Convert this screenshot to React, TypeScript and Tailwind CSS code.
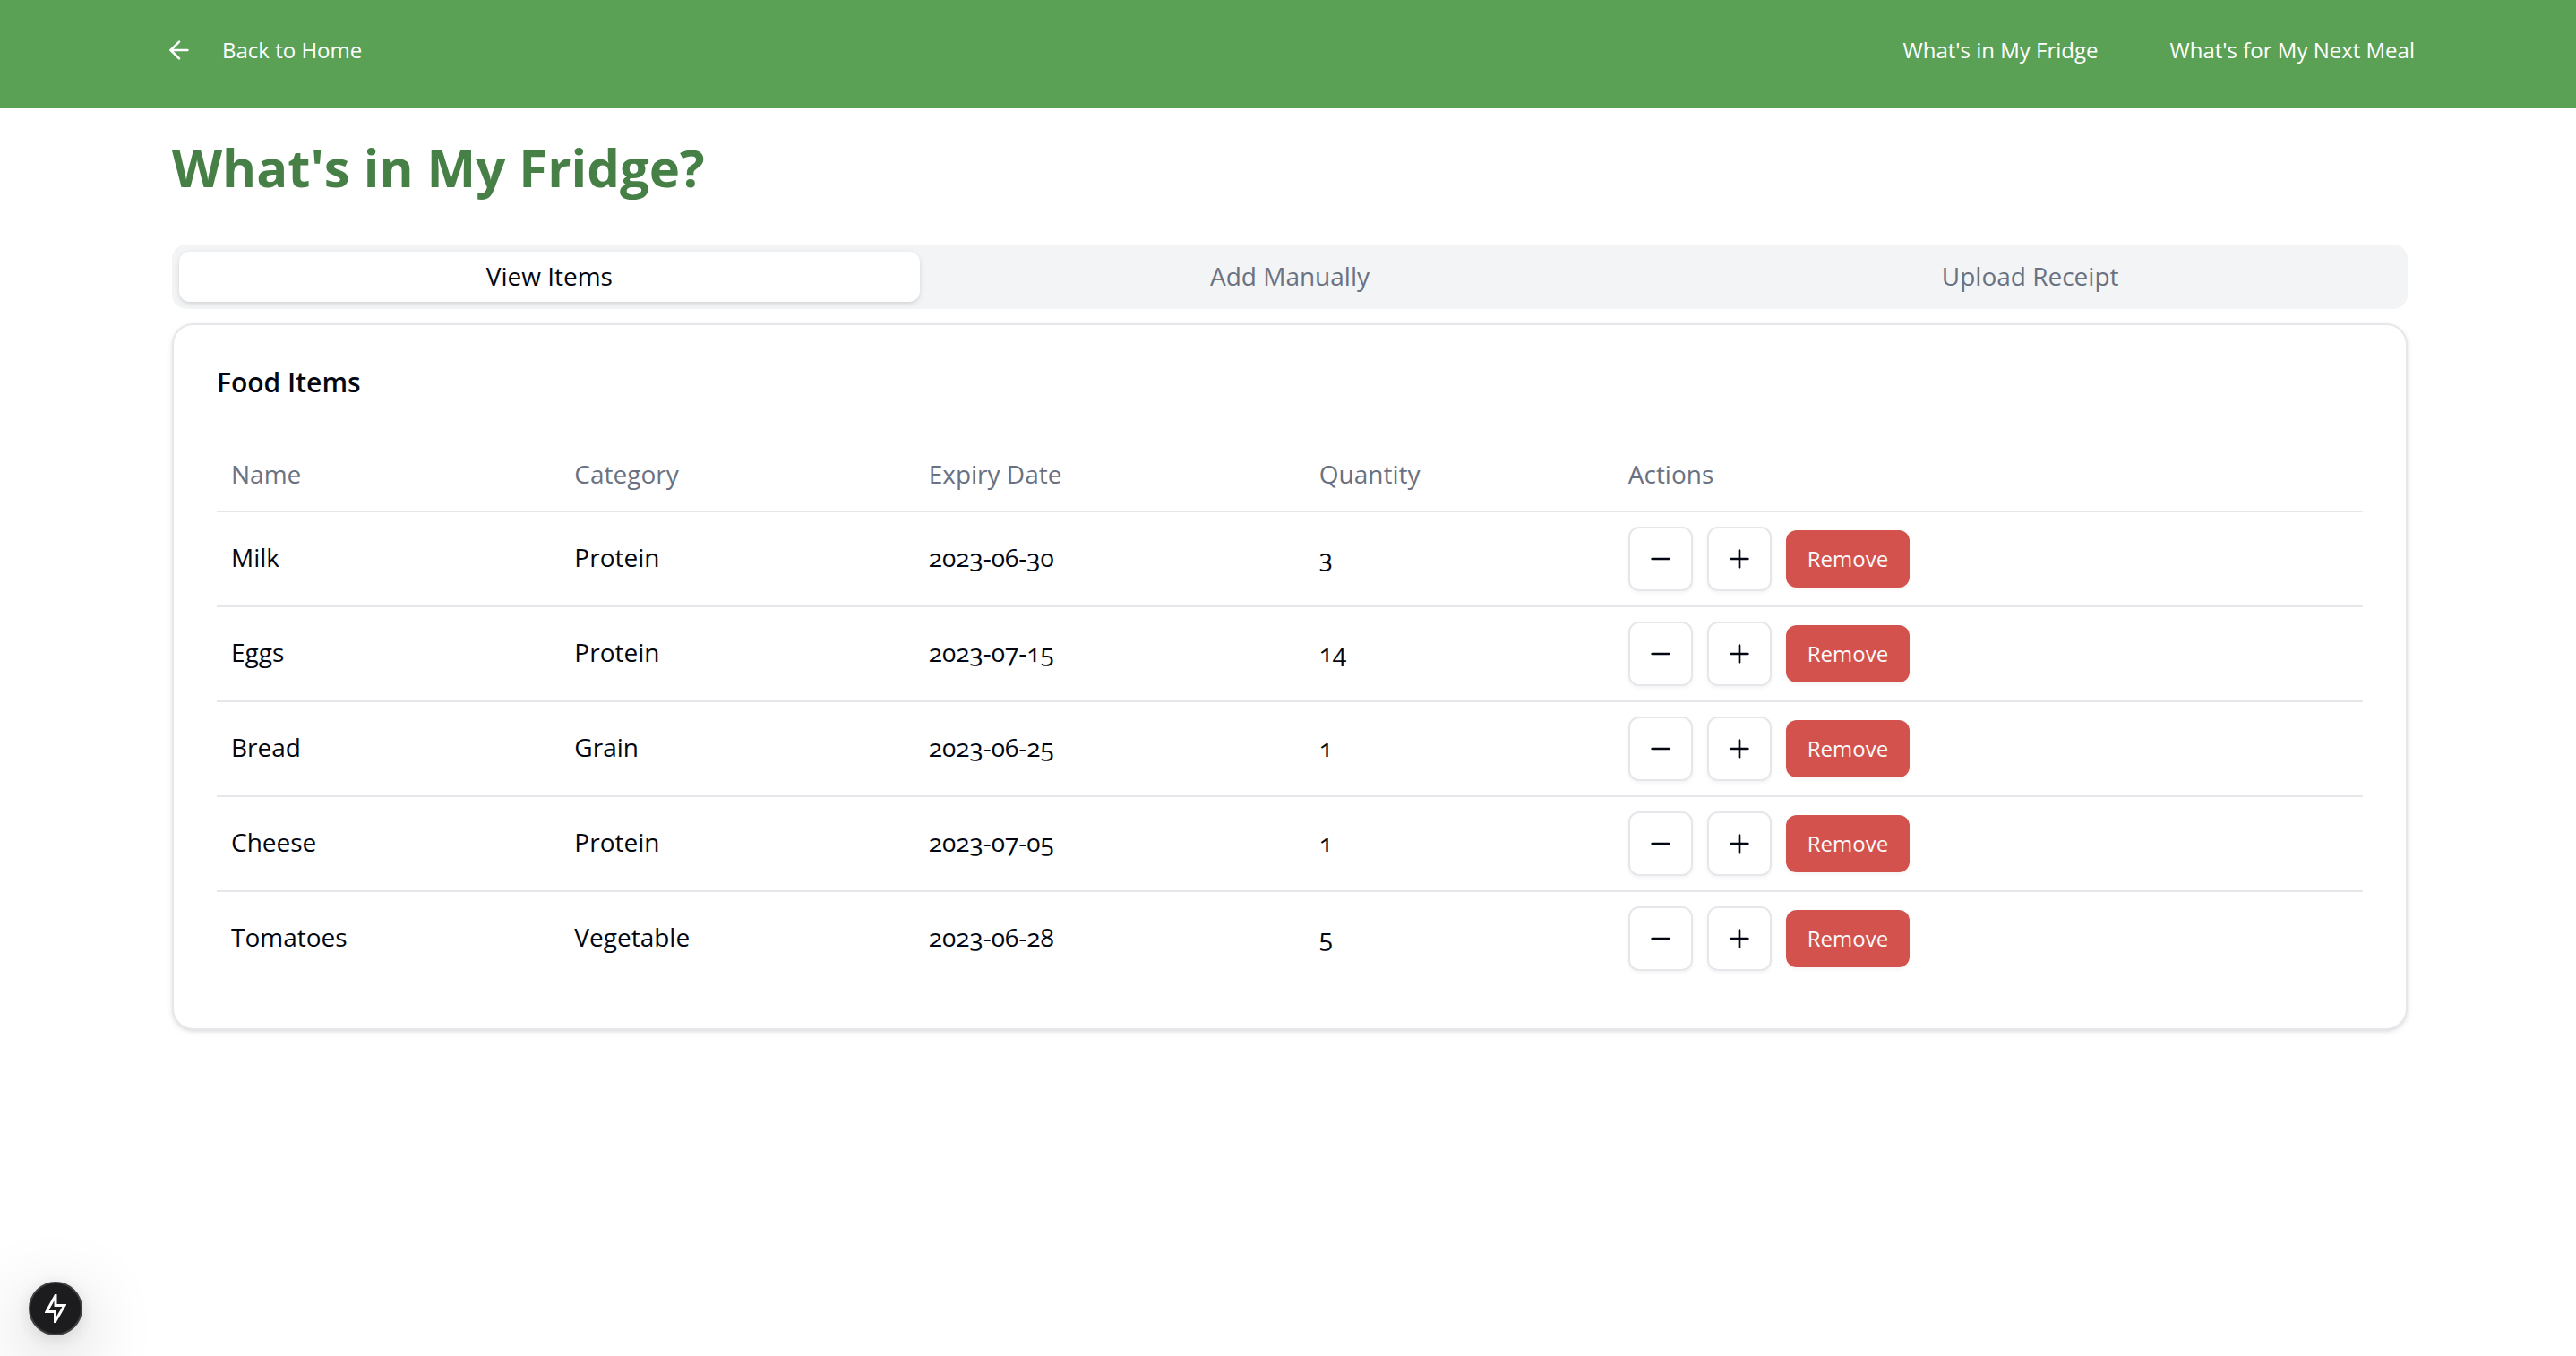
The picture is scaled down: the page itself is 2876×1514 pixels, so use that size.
import { useState } from "react";
import { ArrowLeft, Minus, Plus } from "lucide-react";

type FoodItem = { name: string; category: string; expiry: string; quantity: number };

const initialItems: FoodItem[] = [
  { name: "Milk", category: "Protein", expiry: "2023-06-30", quantity: 3 },
  { name: "Eggs", category: "Protein", expiry: "2023-07-15", quantity: 14 },
  { name: "Bread", category: "Grain", expiry: "2023-06-25", quantity: 1 },
  { name: "Cheese", category: "Protein", expiry: "2023-07-05", quantity: 1 },
  { name: "Tomatoes", category: "Vegetable", expiry: "2023-06-28", quantity: 5 },
];

const tabs = ["View Items", "Add Manually", "Upload Receipt"];

const columns = [
  { label: "Name", width: "w-[16%]" },
  { label: "Category", width: "w-[16.5%]" },
  { label: "Expiry Date", width: "w-[18.2%]" },
  { label: "Quantity", width: "w-[14.4%]" },
  { label: "Actions", width: "" },
];

function Header() {
  return (
    <header className="bg-[#5aa156] pt-6 pr-[180px] pb-[33px] pl-[184px] text-[24px] leading-[32px] font-medium text-white">
      <nav className="flex h-16 items-center justify-between">
        <a href="#home" className="flex items-center gap-8">
          <ArrowLeft className="size-8" />
          Back to Home
        </a>
        <div className="flex items-center gap-20">
          <a href="#fridge">What's in My Fridge</a>
          <a href="#meal">What's for My Next Meal</a>
        </div>
      </nav>
    </header>
  );
}

function StepButton({ label, onClick, children }: { label: string; onClick: () => void; children: React.ReactNode }) {
  return (
    <button
      type="button"
      aria-label={label}
      onClick={onClick}
      className="flex size-[72px] items-center justify-center rounded-xl border-2 border-gray-200 bg-white shadow-[0_2px_4px_rgba(0,0,0,0.05)]"
    >
      {children}
    </button>
  );
}

function FoodTable() {
  const [items, setItems] = useState(initialItems);

  const change = (name: string, delta: number) =>
    setItems((list) =>
      list.map((item) => (item.name === name ? { ...item, quantity: Math.max(0, item.quantity + delta) } : item)),
    );
  const remove = (name: string) => setItems((list) => list.filter((item) => item.name !== name));

  return (
    <table className="w-full table-fixed border-collapse text-left text-[28px] leading-[38px] [font-feature-settings:'onum']">
      <thead>
        <tr className="border-b-2 border-gray-200">
          {columns.map((column) => (
            <th key={column.label} scope="col" className={`h-20 px-4 pb-1 align-middle font-medium text-gray-500 ${column.width}`}>
              {column.label}
            </th>
          ))}
        </tr>
      </thead>
      <tbody>
        {items.map((item) => (
          <tr key={item.name} className="border-b-2 border-gray-200 last:border-0">
            <td className="px-4 pb-1">{item.name}</td>
            <td className="px-4 pb-1">{item.category}</td>
            <td className="px-4 pb-1">{item.expiry}</td>
            <td className="px-4 pb-1">{item.quantity}</td>
            <td className="p-4">
              <div className="flex items-center gap-4">
                <StepButton label={`Decrease ${item.name}`} onClick={() => change(item.name, -1)}>
                  <Minus className="size-8" />
                </StepButton>
                <StepButton label={`Increase ${item.name}`} onClick={() => change(item.name, 1)}>
                  <Plus className="size-8" />
                </StepButton>
                <button
                  type="button"
                  onClick={() => remove(item.name)}
                  className="h-16 rounded-xl bg-[#d4524d] px-6 text-[24px] leading-[32px] font-medium text-gray-50 shadow-[0_2px_4px_rgba(0,0,0,0.05)]"
                >
                  Remove
                </button>
              </div>
            </td>
          </tr>
        ))}
      </tbody>
    </table>
  );
}

export default function App() {
  const [active, setActive] = useState(tabs[0]);

  return (
    <div className="min-h-screen bg-white font-['Open_Sans',sans-serif] text-gray-950">
      <Header />
      <main className="pt-[30px] pr-[188px] pl-48">
        <h1 className="mb-[50px] text-[58px] leading-[72px] font-bold text-[#468046]">What's in My Fridge?</h1>
        <div role="tablist" className="grid h-[72px] grid-cols-3 rounded-2xl bg-gray-100 p-2 text-[28px] leading-[38px] font-medium text-gray-500">
          {tabs.map((tab) => (
            <button
              key={tab}
              type="button"
              role="tab"
              aria-selected={tab === active}
              onClick={() => setActive(tab)}
              className="rounded-xl pb-0.5 aria-selected:bg-white aria-selected:text-gray-950 aria-selected:shadow-[0_2px_6px_rgba(0,0,0,0.1),0_2px_4px_-2px_rgba(0,0,0,0.1)]"
            >
              {tab}
            </button>
          ))}
        </div>
        <section className="mt-4 rounded-3xl border-2 border-gray-200 bg-white p-12 shadow-[0_2px_6px_rgba(0,0,0,0.1),0_2px_4px_-2px_rgba(0,0,0,0.1)]">
          <h2 className="mb-12 text-[30px] leading-[32px] font-semibold">Food Items</h2>
          <FoodTable />
        </section>
      </main>
      <button
        type="button"
        aria-label="Development tools"
        className="fixed bottom-[23px] left-8 flex size-[60px] items-center justify-center rounded-full border-2 border-[#404042] bg-[#1c1c1e] text-white shadow-[0_22px_80px_rgba(0,0,0,0.25),0_4px_20px_rgba(0,0,0,0.12)]"
      >
        <svg viewBox="0 0 24 32" className="h-8 w-6" fill="none" stroke="currentColor" strokeWidth="3">
          <path d="M12 1.500 2 19.500h9.500v11L22 12.500h-10Z" />
        </svg>
      </button>
    </div>
  );
}
